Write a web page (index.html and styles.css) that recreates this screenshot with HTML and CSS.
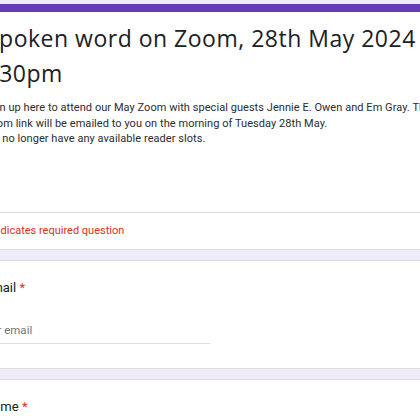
FILE: index.html
```html
<!DOCTYPE html>
<html lang="en">
<head>
    <meta charset="UTF-8">
    <meta name="viewport" content="width=device-width, initial-scale=1.0">
    <title>Spoken word on Zoom</title>
    <link rel="stylesheet" href="styles.css">
</head>
<body>
    <div class="form">
        <div class="card card-header">
            <div class="header-body">
                <h1 class="form-title">Spoken word on Zoom, 28th May 2024 at 7:30pm</h1>
                <div class="form-desc">
                    Sign up here to attend our May Zoom with special guests Jennie E. Owen and Em Gray. The Zoom link will be emailed to you on the morning of Tuesday 28th May.<br>
                    We no longer have any available reader slots.
                </div>
            </div>
            <div class="required-note">* Indicates required question</div>
        </div>

        <div class="card question">
            <div class="q-label">Email <span class="star">*</span></div>
            <div class="q-input">
                <input type="text" placeholder="Your email">
            </div>
        </div>

        <div class="card question">
            <div class="q-label">Name <span class="star">*</span></div>
            <div class="q-input">
                <input type="text" placeholder="Your answer">
            </div>
        </div>
    </div>
</body>
</html>
```

FILE: styles.css
```css
body {
    margin: 0;
    padding: 0;
    background: #f0ebf8;
    font-family: Roboto, Arial, sans-serif;
    color: #202124;
    overflow: hidden;
}
.form {
    width: 512px;
    margin-left: -40px;
    padding-top: 4px;
    display: flex;
    flex-direction: column;
    gap: 10px;
}
.card {
    background: #fff;
    border: 1px solid #dadce0;
    border-radius: 8px;
}
.card-header {
    border-top: 8px solid #673ab7;
}
.header-body {
    padding: 9px 20px 65px 23px;
}
.form-title {
    margin: 0 0 0 -5px;
    text-indent: 7px;
    font-family: "Open Sans", sans-serif;
    font-size: 23px;
    font-weight: 400;
    line-height: 35px;
    letter-spacing: 0.5px;
}
.form-desc {
    margin-top: 9px;
    font-size: 11px;
    line-height: 15.5px;
    letter-spacing: 0.05px;
    color: #2b2c2f;
}
.required-note {
    border-top: 1px solid #dadce0;
    padding: 10px 23px 11px;
    font-size: 11px;
    line-height: 15.5px;
    color: #d93025;
}
.question {
    padding: 17px 20px 24px 23px;
}
.q-label {
    font-size: 13px;
    line-height: 19px;
}
.star {
    color: #d93025;
}
.q-input {
    width: 226px;
    margin-top: 25px;
    border-bottom: 1px solid #dadce0;
}
.q-input input {
    display: block;
    width: 100%;
    border: none;
    outline: none;
    padding: 0 0 5px;
    text-indent: -6px;
    font-family: Roboto, Arial, sans-serif;
    font-size: 11.5px;
    line-height: 16px;
    background: transparent;
}
.q-input input::placeholder {
    color: #70757a;
}
```
